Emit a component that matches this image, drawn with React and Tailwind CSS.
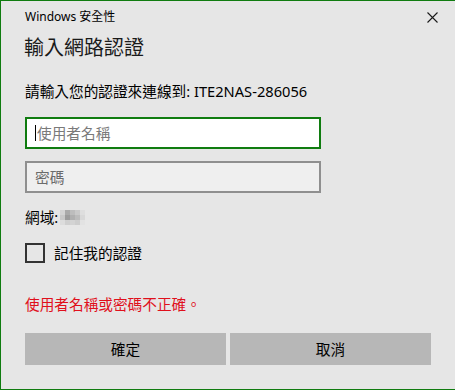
const font = "font-['Noto_Sans','Noto_Sans_CJK_TC',sans-serif]"

const BlurredDomain = () => (
  <svg width="25" height="15" viewBox="0 0 5 3" shapeRendering="crispEdges" className="ml-[2px]">
    <rect x="0" y="0" width="1" height="1" fill="#d3d3d3" />
    <rect x="1" y="0" width="1" height="1" fill="#a9a9a9" />
    <rect x="2" y="0" width="1" height="1" fill="#bdbdbd" />
    <rect x="3" y="0" width="1" height="1" fill="#c9c9c9" />
    <rect x="4" y="0" width="1" height="1" fill="#dedede" />
    <rect x="0" y="1" width="1" height="1" fill="#c8c8c8" />
    <rect x="1" y="1" width="1" height="1" fill="#9c9c9c" />
    <rect x="2" y="1" width="1" height="1" fill="#b0b0b0" />
    <rect x="3" y="1" width="1" height="1" fill="#bcbcbc" />
    <rect x="4" y="1" width="1" height="1" fill="#d8d8d8" />
    <rect x="0" y="2" width="1" height="1" fill="#dcdcdc" />
    <rect x="1" y="2" width="1" height="1" fill="#cfcfcf" />
    <rect x="2" y="2" width="1" height="1" fill="#d3d3d3" />
    <rect x="3" y="2" width="1" height="1" fill="#cdcdcd" />
    <rect x="4" y="2" width="1" height="1" fill="#e2e2e2" />
  </svg>
)

const App = () => {
  return (
    <div className={`w-[455px] h-[390px] bg-[#e6e6e6] border-l border-t border-b border-[#107c10] flex flex-col text-black ${font}`}>
      {/* title bar */}
      <div className="h-[32px] flex items-center justify-between pl-6 pr-[17px]">
        <span className="text-[12px] leading-[16px]">Windows 安全性</span>
        <svg width="11" height="11" viewBox="0 0 11 11" className="text-[#1a1a1a]">
          <path d="M0.5 0.5L10.5 10.5M10.5 0.5L0.5 10.5" stroke="currentColor" strokeWidth="1.1" />
        </svg>
      </div>

      <div className="flex flex-col pl-6 pr-6">
        <h1 className="text-[20px] leading-[28px] mt-[1px] -ml-[1px] text-[#1a1a1a]">輸入網路認證</h1>

        <p className="text-[14.67px] leading-[20px] mt-[19px]">請輸入您的認證來連線到: ITE2NAS-286056</p>

        <div className="mt-4 w-[296px] h-[32px] bg-white border-2 border-[#107c10] flex items-center pl-[8px]">
          <span className="w-px h-[16px] bg-black mr-px" />
          <span className="text-[14.67px] leading-[20px] text-[#7a7a7a]">使用者名稱</span>
        </div>

        <div className="mt-3 w-[296px] h-[32px] bg-[#efefef] border-2 border-[#8f8f8f] flex items-center pl-[8px]">
          <span className="text-[14.67px] leading-[20px] text-[#6b6b6b]">密碼</span>
        </div>

        <div className="mt-[14px] h-[20px] flex items-center text-[14.67px] leading-[20px]">
          <span>網域:</span>
          <BlurredDomain />
        </div>

        <label className="mt-4 h-[20px] flex items-center">
          <span className="w-[20px] h-[20px] border-2 border-[#333333] bg-[#e6e6e6]" />
          <span className="ml-[9px] text-[14.67px] leading-[20px]">記住我的認證</span>
        </label>

        <p className="mt-[31px] text-[14.67px] leading-[20px] text-[#e0101c]">使用者名稱或密碼不正確。</p>

        <div className="mt-[19px] grid grid-cols-2 gap-1 w-[406px]">
          <button className="h-[32px] bg-[#b7b7b7] text-[14.67px] leading-[20px]">確定</button>
          <button className="h-[32px] bg-[#b7b7b7] text-[14.67px] leading-[20px]">取消</button>
        </div>
      </div>
    </div>
  )
}

export default App
